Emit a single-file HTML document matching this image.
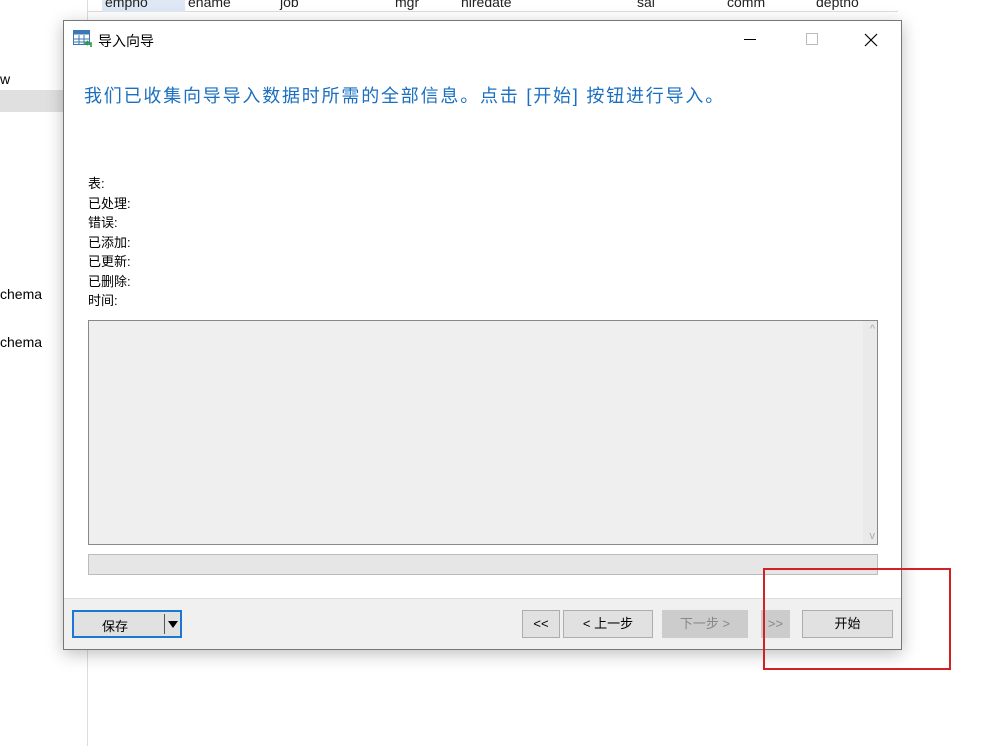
<!DOCTYPE html>
<html><head><meta charset="utf-8"><style>
*{margin:0;padding:0;box-sizing:border-box}
body{width:1004px;height:746px;background:#fff;position:relative;overflow:hidden;font-family:"Liberation Sans","Microsoft YaHei","Noto Sans CJK SC",sans-serif;font-size:13px;color:#000}
.a{position:absolute}
.hd{top:-6px;font-size:14px;color:#222}
</style></head><body>
<div class="a" style="left:87px;top:0;width:1px;height:746px;background:#ddd"></div>
<div class="a" style="left:88px;top:0;width:810px;height:12px;border-bottom:1px solid #ddd"></div>
<div class="a" style="left:102px;top:0;width:83px;height:12px;background:#dde8f4"></div>
<div class="a hd" style="left:105px">empno</div>
<div class="a hd" style="left:188px">ename</div>
<div class="a hd" style="left:280px">job</div>
<div class="a hd" style="left:395px">mgr</div>
<div class="a hd" style="left:461px">hiredate</div>
<div class="a hd" style="left:637px">sal</div>
<div class="a hd" style="left:727px">comm</div>
<div class="a hd" style="left:816px">deptno</div>
<div class="a" style="left:0;top:71px;font-size:14px">w</div>
<div class="a" style="left:0;top:90px;width:63px;height:22px;background:#e0e0e0"></div>
<div class="a" style="left:0;top:286px;font-size:14px">chema</div>
<div class="a" style="left:0;top:334px;font-size:14px">chema</div>

<div class="a" style="left:63px;top:20px;width:839px;height:630px;background:#fff;border:1px solid #777;box-shadow:0 4px 16px rgba(0,0,0,.25)">
 <svg class="a" style="left:9px;top:9px" width="20" height="18" viewBox="0 0 20 18"><rect x="0.5" y="0.5" width="16" height="14" fill="#fff" stroke="#3a78b5"/><rect x="0.5" y="0.5" width="16" height="4" fill="#3a78b5"/><path d="M6 5v10M11 5v10M1 9h16M1 12h16" stroke="#3a78b5"/><path d="M18 17v-4h-5l2-2M13 13l2 2" stroke="#2a9a3a" stroke-width="1.6" fill="none"/></svg>
 <div class="a" style="left:34px;top:10px;font-size:14px">导入向导</div>
 <div class="a" style="left:680px;top:18px;width:12px;height:1px;background:#000"></div>
 <div class="a" style="left:742px;top:12px;width:12px;height:12px;border:1px solid #bbb"></div>
 <svg class="a" style="left:800px;top:12px" width="14" height="14"><path d="M1 1L13 13M13 1L1 13" stroke="#000" stroke-width="1.2"/></svg>
 <div class="a" style="left:20px;top:61px;font-size:18px;letter-spacing:1.8px;color:#1a6fc0;white-space:nowrap">我们已收集向导导入数据时所需的全部信息。点击 [开始] 按钮进行导入。</div>
 <div class="a" style="left:24px;top:153px;line-height:19.5px;font-size:13px">表:<br>已处理:<br>错误:<br>已添加:<br>已更新:<br>已删除:<br>时间:</div>
 <div class="a" style="left:24px;top:299px;width:790px;height:225px;border:1px solid #888;background:#efefef">
  <div class="a" style="right:0;top:0;width:14px;height:100%;background:#eaeaea"></div>
  <div class="a" style="right:2px;top:2px;font-size:11px;color:#aaa">^</div>
  <div class="a" style="right:2px;bottom:2px;font-size:11px;color:#aaa">v</div>
 </div>
 <div class="a" style="left:24px;top:533px;width:790px;height:21px;border:1px solid #bbb;background:#e6e6e6"></div>
 <div class="a" style="left:0;top:577px;width:837px;height:51px;background:#f0f0f0;border-top:1px solid #ddd"></div>
 <div class="a" style="left:8px;top:589px;width:110px;height:28px;border:2px solid #1a78d0;background:#e1e1e1"><span class="a" style="left:28px;top:4px">保存</span><div class="a" style="left:90px;top:2px;width:1px;height:20px;background:#555"></div><div class="a" style="left:94px;top:9px;border-left:5px solid transparent;border-right:5px solid transparent;border-top:7px solid #000"></div></div>
 <div class="a" style="left:458px;top:589px;width:38px;height:28px;border:1px solid #adadad;background:#e1e1e1;text-align:center;line-height:26px">&lt;&lt;</div>
 <div class="a" style="left:499px;top:589px;width:90px;height:28px;border:1px solid #adadad;background:#e1e1e1;text-align:center;line-height:26px">&lt; 上一步</div>
 <div class="a" style="left:598px;top:589px;width:86px;height:28px;border:1px solid #ccc;background:#ccc;color:#888;text-align:center;line-height:26px">下一步 &gt;</div>
 <div class="a" style="left:697px;top:589px;width:29px;height:28px;border:1px solid #ccc;background:#ccc;color:#888;text-align:center;line-height:26px">&gt;&gt;</div>
 <div class="a" style="left:738px;top:589px;width:91px;height:28px;border:1px solid #adadad;background:#e1e1e1;text-align:center;line-height:26px">开始</div>
</div>
<div class="a" style="left:763px;top:568px;width:188px;height:102px;border:2px solid #d42020"></div>
</body></html>
